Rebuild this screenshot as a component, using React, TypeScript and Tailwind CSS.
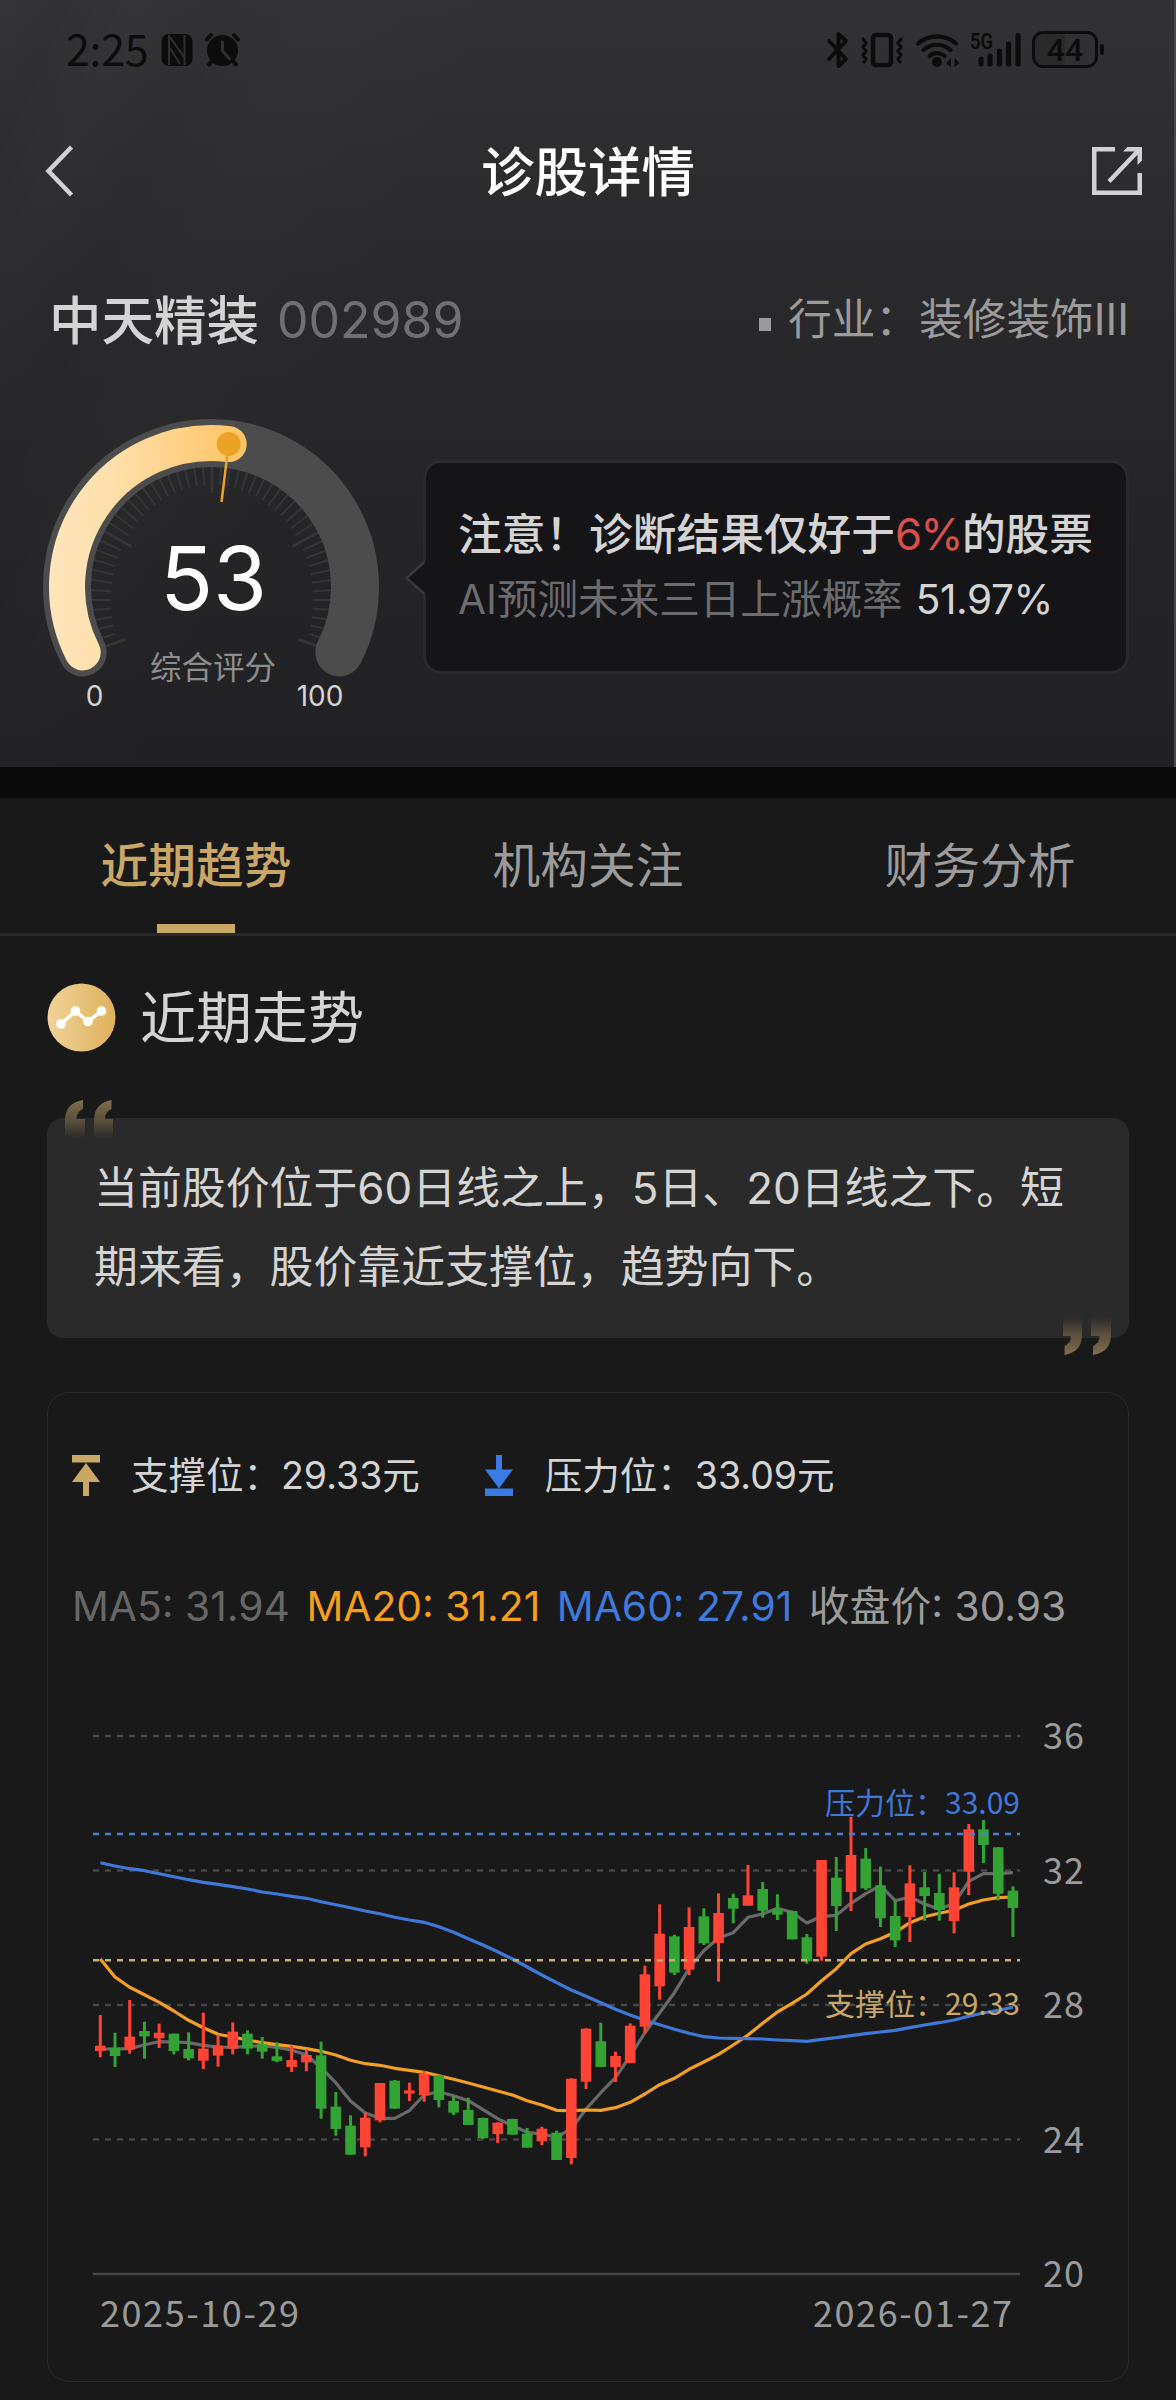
import { clsx } from "clsx"

type Candle = [up: 0 | 1, high: number, top: number, bottom: number, low: number]

// Vertical values are thirds of a pixel below the top of the chart.
const CANDLES: Candle[] = [
  [1, 945, 1037, 1053, 1072],
  [0, 998, 1043, 1068, 1101],
  [1, 900, 1010, 1049, 1061],
  [0, 965, 993, 1009, 1076],
  [1, 971, 998, 1015, 1044],
  [0, 1001, 1001, 1053, 1063],
  [0, 997, 1047, 1075, 1081],
  [1, 938, 1046, 1082, 1107],
  [1, 1004, 1037, 1067, 1100],
  [1, 967, 995, 1046, 1063],
  [0, 991, 1001, 1046, 1063],
  [0, 1011, 1033, 1055, 1076],
  [0, 1027, 1069, 1083, 1087],
  [1, 1037, 1080, 1101, 1116],
  [1, 1048, 1065, 1087, 1114],
  [0, 1025, 1066, 1226, 1256],
  [0, 1176, 1220, 1287, 1307],
  [0, 1246, 1277, 1364, 1364],
  [1, 1238, 1253, 1342, 1369],
  [1, 1149, 1149, 1261, 1267],
  [0, 1140, 1142, 1226, 1226],
  [1, 1148, 1171, 1181, 1203],
  [1, 1113, 1122, 1186, 1205],
  [0, 1126, 1126, 1200, 1222],
  [0, 1189, 1203, 1238, 1245],
  [0, 1193, 1230, 1275, 1275],
  [0, 1253, 1254, 1314, 1317],
  [1, 1267, 1268, 1302, 1329],
  [0, 1256, 1257, 1304, 1304],
  [0, 1284, 1301, 1343, 1343],
  [1, 1280, 1286, 1324, 1335],
  [0, 1292, 1298, 1380, 1380],
  [1, 1135, 1136, 1374, 1393],
  [1, 985, 986, 1145, 1167],
  [0, 968, 1024, 1101, 1101],
  [1, 1055, 1068, 1101, 1146],
  [1, 970, 977, 1089, 1089],
  [1, 797, 823, 980, 1000],
  [1, 613, 701, 859, 899],
  [0, 704, 709, 818, 825],
  [1, 622, 681, 809, 825],
  [0, 625, 649, 730, 735],
  [1, 580, 639, 729, 845],
  [0, 581, 594, 626, 670],
  [1, 495, 586, 617, 617],
  [0, 546, 567, 632, 653],
  [0, 583, 628, 644, 660],
  [0, 632, 633, 718, 718],
  [0, 702, 712, 783, 791],
  [1, 480, 480, 770, 782],
  [0, 471, 533, 618, 693],
  [1, 350, 465, 576, 633],
  [0, 444, 476, 565, 570],
  [0, 500, 556, 655, 681],
  [0, 602, 648, 721, 741],
  [1, 496, 550, 651, 726],
  [0, 516, 562, 588, 662],
  [0, 522, 579, 630, 662],
  [1, 517, 562, 663, 700],
  [1, 372, 388, 515, 585],
  [0, 360, 388, 435, 489],
  [0, 441, 442, 581, 601],
  [0, 559, 572, 624, 711],
]

const MA5 = [
  1047, 1047, 1046, 1034, 1025, 1026, 1028, 1036, 1041, 1042, 1039, 1037, 1042,
  1051, 1064, 1103, 1148, 1203, 1239, 1255, 1255, 1232, 1185, 1175, 1187, 1202,
  1229, 1256, 1277, 1297, 1302, 1312, 1286, 1227, 1178, 1133, 1068, 998, 938,
  878, 805, 752, 714, 698, 652, 642, 625, 637, 669, 649, 646, 610, 581, 557,
  602, 591, 612, 628, 610, 544, 521, 521, 518,
]

const MA20 = [
  777, 831, 862, 884, 907, 933, 961, 983, 1003, 1011, 1020, 1028, 1034, 1039,
  1046, 1054, 1065, 1081, 1091, 1096, 1105, 1111, 1117, 1127, 1138, 1149, 1161,
  1173, 1185, 1202, 1215, 1231, 1232, 1230, 1231, 1223, 1207, 1182, 1154, 1135,
  1108, 1086, 1063, 1035, 1005, 970, 936, 910, 882, 842, 806, 761, 732, 716,
  697, 668, 650, 640, 631, 612, 600, 593, 591,
]

const MA60 = [
  488, 498, 506, 512, 521, 530, 539, 547, 553, 560, 567, 576, 582, 589, 595,
  605, 614, 623, 633, 641, 652, 660, 667, 680, 697, 716, 735, 755, 777, 801,
  825, 848, 870, 889, 908, 928, 945, 961, 974, 988, 1000, 1010, 1014, 1015,
  1016, 1017, 1020, 1022, 1024, 1018, 1013, 1007, 1001, 996, 991, 983, 975,
  968, 960, 949, 939, 931, 922,
]

const TABS = ["近期趋势", "机构关注", "财务分析"]

const px = (i: number) => 52.3 + i * 14.72
const py = (v: number) => v / 3
const toPoints = (values: number[]) =>
  values.map((v, i) => `${px(i).toFixed(1)},${py(v).toFixed(1)}`).join(" ")

function StatusBar() {
  return (
    <div className="flex h-[99px] items-center pr-[70px] pl-[66px] text-[#0c0c0c]">
      <span className="-mt-[4px] w-[83px] font-['Noto_Sans_CJK_SC',sans-serif] text-[43px] leading-none tracking-[-0.3px]">
        2:25
      </span>
      <svg className="ml-[12px] h-[34px] w-[32px]" viewBox="0 0 32 34">
        <rect x="0.5" y="1" width="31" height="32" rx="7" fill="currentColor" />
        <path
          d="M8 2v30M23.500 32V2M9 4l14 20M9 15l10 16"
          fill="none"
          stroke="#2f2f31"
          strokeWidth="2"
        />
      </svg>
      <svg className="ml-[11px] h-[35px] w-[37px]" viewBox="0 0 37 35">
        <g fill="none" stroke="currentColor" strokeLinecap="round" strokeWidth="4">
          <path d="M3 7.5 7 3M34 7.5 30 3M7.5 29.5 5 32.5M29.5 29.5 32 32.5" />
        </g>
        <circle cx="18.5" cy="18.5" r="15.5" fill="currentColor" />
        <path
          d="M18.500 10v9l7 8"
          fill="none"
          stroke="#2f2f31"
          strokeLinecap="round"
          strokeWidth="3"
        />
      </svg>
      <svg className="ml-auto h-[38px] w-[24px]" viewBox="0 0 24 38">
        <path
          d="M3 10 20 28l-7.500 7V3L20 10 3 28"
          fill="none"
          stroke="currentColor"
          strokeLinecap="round"
          strokeLinejoin="round"
          strokeWidth="4"
        />
      </svg>
      <svg className="ml-[10px] h-[36px] w-[44px]" viewBox="0 0 44 36">
        <g
          fill="none"
          stroke="currentColor"
          strokeLinecap="round"
          strokeLinejoin="round"
        >
          <rect x="13" y="3" width="18" height="30" rx="3" strokeWidth="4.500" />
          <path
            d="M3 7l3 4-3 4 3 4-3 4 3 4-2 3M41 7l-3 4 3 4-3 4 3 4-3 4 2 3"
            strokeWidth="3.200"
          />
        </g>
      </svg>
      <svg className="ml-[11px] h-[36px] w-[46px]" viewBox="0 0 46 36">
        <g fill="none" stroke="currentColor" strokeLinecap="round" strokeWidth="4.200">
          <path d="M3 11.500a29 29 0 0 1 38 0M8.500 18a20 20 0 0 1 27 0M14.500 24a11 11 0 0 1 15 0" />
        </g>
        <circle cx="22" cy="30" r="5" fill="currentColor" />
        <path d="m36 26v9l-5-3.500ZM39.500 35v-9l5 5Z" fill="currentColor" />
      </svg>
      <svg className="ml-[5px] h-[54px] w-[56px]" viewBox="-4 -8 56 54">
        <text
          x="0"
          y="18"
          fill="currentColor"
          fontFamily="Roboto, sans-serif"
          fontSize="22"
          fontWeight="600"
          textLength="23"
          lengthAdjust="spacingAndGlyphs"
        >
          5G
        </text>
        <g stroke="currentColor" strokeLinecap="round" strokeWidth="5.200">
          <path d="M11 28v5M20 25v8M29.500 20v13M38.500 13v20M48 4.500V33" />
        </g>
      </svg>
      <div className="ml-[10px] flex h-[37px] w-[66px] items-center justify-center rounded-[11px] border-[3px] border-[#0c0c0c] bg-linear-to-r from-[#2a2a2b] from-50% to-transparent to-50% font-[Roboto,sans-serif] text-[32px] leading-none font-medium">
        44
      </div>
      <div className="ml-[2px] h-[11px] w-[4px] rounded-full bg-[#0c0c0c]" />
    </div>
  )
}

function NavBar() {
  return (
    <div className="flex h-[144px] items-center justify-between pr-[32px] pl-[45px]">
      <svg className="h-[52px] w-[30px]" viewBox="0 0 30 52">
        <path d="M26.500 2 3.500 26l23 24" fill="none" stroke="#d2d2d2" strokeWidth="4.500" />
      </svg>
      <h1 className="mt-[4px] ml-[9px] text-[53.500px] leading-none font-medium text-white">
        诊股详情
      </h1>
      <svg className="h-[50px] w-[50px]" viewBox="0 0 50 50">
        <g fill="none" stroke="#d2d2d2" strokeWidth="4.500">
          <path d="M23 3.250H2.250v43.500h45.500V27" />
          <path d="M17 35.500 46 5" />
        </g>
        <path d="M31 5.500 35.500 1H50v13.500L45.500 19V5.500Z" fill="#d2d2d2" />
      </svg>
    </div>
  )
}

function Gauge() {
  const ticks = Array.from({ length: 53 }, (_, i) => {
    const n = i - 26
    const major = n % 14 === 0 || Math.abs(n) === 26
    const angle = ((90 - n * (60 / 14)) * Math.PI) / 180
    const rx = major ? 93 : 101
    const ry = major ? 107 : 115
    return {
      major,
      x1: 212 + rx * Math.cos(angle),
      y1: 201 - ry * Math.sin(angle),
      x2: 212 + 125 * Math.cos(angle),
      y2: 201 - 138 * Math.sin(angle),
    }
  })

  return (
    <svg className="h-[368px] w-[424px] shrink-0" viewBox="0 0 424 368">
      <defs>
        <linearGradient
          id="score"
          gradientUnits="userSpaceOnUse"
          x1="49"
          x2="246"
          y1="0"
          y2="0"
        >
          <stop offset="0" stopColor="#ffe5bc" />
          <stop offset="0.3" stopColor="#ffe0ad" />
          <stop offset="1" stopColor="#ffc363" />
        </linearGradient>
        <clipPath id="dial">
          <circle cx="211" cy="188" r="122" />
        </clipPath>
      </defs>
      <g clipPath="url(#dial)" stroke="#353537">
        {ticks.map(({ major, ...line }, i) => (
          <line key={i} {...line} strokeWidth={major ? 3 : 2} />
        ))}
      </g>
      <path
        d="M82.700 253.400A144 144 0 1 1 339.300 253.400"
        fill="none"
        stroke="#4c4c4c"
        strokeLinecap="round"
        strokeWidth="48"
      />
      <path
        d="M82.700 253.400A144 144 0 0 1 228.700 45.100"
        fill="none"
        stroke="url(#score)"
        strokeLinecap="round"
        strokeWidth="36"
      />
      <path d="M228.700 45 221.500 103" stroke="#eba327" strokeWidth="2.500" />
      <circle cx="228.700" cy="45.100" r="12" fill="#eba327" />
      <text x="213.500" y="210.500" fill="#fff" fontSize="87.500" textAnchor="middle">
        53
      </text>
      <text x="213" y="279.500" fill="#8d8d8e" fontSize="31.500" textAnchor="middle">
        综合评分
      </text>
      <g fill="#d4d4d4" fontSize="28" textAnchor="middle">
        <text x="94.500" y="307">
          0
        </text>
        <text x="320" y="307">
          100
        </text>
      </g>
    </svg>
  )
}

function DiagnosisBubble() {
  return (
    <div className="relative mt-[61px] -ml-px flex h-[214px] w-[706px] flex-col rounded-[18px] border-[3px] border-[#2b2b2d] bg-[#151517] pt-[45px] pl-[32px] whitespace-nowrap">
      <svg
        className="absolute top-[97px] -left-[22px] h-[36px] w-[23px]"
        viewBox="0 0 23 36"
      >
        <path d="M23 0 2.500 18 23 36Z" fill="#151517" />
        <path d="M20.500 2 2.500 18l18 16" fill="none" stroke="#38383a" strokeWidth="2.500" />
      </svg>
      <p className="text-[43.700px] leading-[54px] font-medium text-[#d4d4d4]">
        注意！诊断结果仅好于
        <span className="font-normal tracking-[-1.500px] text-[#d94f4b]">6%</span>的股票
      </p>
      <p className="mt-[11px] text-[40.600px] leading-[54px] text-[#6c6c6f]">
        AI预测未来三日上涨概率
        <span className="ml-[13px] tracking-[-0.4px] text-[#d4d4d4]">51.97%</span>
      </p>
    </div>
  )
}

function Header() {
  return (
    <header className="h-[767px] border-r-2 border-[#48484a] bg-[linear-gradient(115deg,rgba(255,255,255,0.02)_0%,transparent_4%,rgba(255,255,255,0.015)_9%,transparent_14%,rgba(255,255,255,0.012)_22%,transparent_34%),linear-gradient(to_bottom,#323234,#29292b_38%,#212123)]">
      <StatusBar />
      <NavBar />
      <div className="flex h-[156px] items-center pr-[45px] pl-[49px] leading-none">
        <span className="text-[52.500px] font-medium text-[#d4d4d4]">中天精装</span>
        <span className="-mt-[3px] ml-[18px] text-[50px] font-normal text-[#707072]">
          002989
        </span>
        <div className="ml-auto h-[13px] w-[12px] translate-y-[3px] bg-[#9b9b9b]" />
        <span className="-mt-[3px] ml-[17px] text-[43.700px] text-[#9b9b9b]">
          行业：装修装饰III
        </span>
      </div>
      <div className="flex items-start">
        <Gauge />
        <DiagnosisBubble />
      </div>
    </header>
  )
}

function Tabs() {
  return (
    <nav className="grid h-[138px] grid-cols-3 border-b-[3px] border-[#2a2a2c]">
      {TABS.map((tab, i) => (
        <div
          key={tab}
          className={clsx(
            "flex flex-col items-center pt-[38px] text-[47.700px] leading-[60px]",
            i === 0 ? "font-medium text-[#c9a765]" : "text-[#9b9b9b]",
          )}
        >
          {tab}
          {i === 0 && <div className="mt-auto h-[9px] w-[78px] bg-[#c9a765]" />}
        </div>
      ))}
    </nav>
  )
}

function QuoteMark({ id, className }: { id: string; className: string }) {
  return (
    <svg className={clsx("absolute h-[38px] w-[49px]", className)} viewBox="0 0 49 38">
      <defs>
        <linearGradient id={id} x1="0" x2="0" y1="0" y2="1">
          <stop offset="0" stopColor="#82714f" />
          <stop offset="0.500" stopColor="#6b5d43" stopOpacity="0.800" />
          <stop offset="1" stopColor="#6b5d43" stopOpacity="0" />
        </linearGradient>
      </defs>
      <path
        d="M18 0v9c-4 2-6.500 5-6.500 10H20v19H0V20C0 9 6 2 18 0ZM46.500 0v9c-4 2-6.500 5-6.500 10H48v19H29V20C29 9 35 2 46.500 0Z"
        fill={`url(#${id})`}
      />
    </svg>
  )
}

function TrendSummary() {
  return (
    <div className="relative mt-[65px] h-[220px] rounded-[16px] bg-[#2a2a2a] pt-[31px] pl-[47px] text-[43.900px] leading-[79px] text-[#d4d4d4]">
      <QuoteMark id="quote-open" className="top-[-18px] left-[18px]" />
      <p className="whitespace-nowrap">
        当前股价位于60日线之上，5日、20日线之下。短
        <br />
        期来看，股价靠近支撑位，趋势向下。
      </p>
      <QuoteMark id="quote-close" className="right-[18px] bottom-[-17px] rotate-180" />
    </div>
  )
}

function CandleChart() {
  return (
    <svg
      className="mt-[45px] h-[680px] w-[1080px] font-['Noto_Sans_CJK_SC',sans-serif]"
      viewBox="0 0 1080 680"
    >
      {[36, 32, 28, 24, 20].map((price, i) => {
        const y = 36 + i * 134.5
        return (
          <g key={price}>
            <line
              x1="45"
              x2="972"
              y1={y}
              y2={y}
              stroke="#464648"
              strokeDasharray={price === 20 ? undefined : "6 6"}
              strokeWidth="2.400"
            />
            <text
              x="995"
              y={y + 13}
              fill="#9b9b9b"
              fontSize="36"
              textLength="41"
            >
              {price}
            </text>
          </g>
        )
      })}

      <g fill="none" strokeLinejoin="round" strokeWidth="3.200">
        <polyline points={toPoints(MA5)} stroke="#696969" />
        <polyline points={toPoints(MA20)} stroke="#f2a023" />
        <polyline points={toPoints(MA60)} stroke="#3f78d8" />
      </g>

      {CANDLES.map(([up, high, top, bottom, low], i) => (
        <g key={i} fill={up ? "#ff4433" : "#33a433"}>
          <rect x={px(i) - 1.5} y={py(high)} width="3" height={py(low - high)} />
          <rect x={px(i) - 5.3} y={py(top)} width="10.600" height={py(bottom - top)} />
        </g>
      ))}

      <g strokeDasharray="6 6" strokeWidth="2.400">
        <line x1="45" x2="972" y1="134" y2="134" stroke="#4a7fd6" />
        <line x1="45" x2="972" y1="260.300" y2="260.300" stroke="#cdac72" />
      </g>
      <g fontSize="30">
        <text x="777" y="114" fill="#3f78d8" textLength="195">
          压力位：33.09
        </text>
        <text x="777" y="315" fill="#c9a765" textLength="195">
          支撑位：29.33
        </text>
      </g>

      <g fill="#9b9b9b" fontSize="36">
        <text x="52" y="627" textLength="199">
          2025-10-29
        </text>
        <text x="765" y="627" textLength="199">
          2026-01-27
        </text>
      </g>
    </svg>
  )
}

function TrendCard() {
  return (
    <div className="mt-[54px] h-[990px] rounded-[22px] border border-[#29292b]">
      <div className="flex h-[162px] items-center pt-[3px] pl-[24px] text-[37.500px] leading-none text-[#d4d4d4]">
        <svg className="h-[41px] w-[28px]" viewBox="0 0 28 41">
          <path d="M0 0h28v7.500H0ZM14 8l14 19H17v14h-6V27H0Z" fill="#c9a765" />
        </svg>
        <span className="ml-[31px]">支撑位：29.33元</span>
        <svg className="ml-[65px] h-[41px] w-[28px]" viewBox="0 0 28 41">
          <path d="M0 41h28v-7.500H0ZM14 33.500l14-19H17V0h-6v14.500H0Z" fill="#3a7ce6" />
        </svg>
        <span className="ml-[32px]">压力位：33.09元</span>
      </div>
      <div className="flex h-[100px] items-center gap-[16.500px] pt-[3px] pl-[24px] text-[40.800px] leading-none whitespace-nowrap">
        <span className="text-[#676767]">MA5: 31.94</span>
        <span className="text-[#f59f1a]">MA20: 31.21</span>
        <span className="text-[#3e7bdc]">MA60: 27.91</span>
        <span className="text-[#9b9b9b]">收盘价: 30.93</span>
      </div>
      <CandleChart />
    </div>
  )
}

export default function App() {
  return (
    <div className="h-[2400px] w-[1176px] overflow-hidden bg-[#19191a] font-[Inter,'Noto_Sans_CJK_SC',sans-serif]">
      <Header />
      <div className="h-[31px] bg-[#0a0a0a]" />
      <Tabs />
      <main className="px-[47px] pt-[45px]">
        <div className="flex h-[72px] items-center gap-[24px]">
          <svg className="h-[69px] w-[69px]" viewBox="0 0 69 69">
            <defs>
              <linearGradient id="badge">
                <stop offset="0" stopColor="#efd299" />
                <stop offset="1" stopColor="#dfb15c" />
              </linearGradient>
            </defs>
            <circle cx="34.500" cy="34.500" r="34" fill="url(#badge)" />
            <g fill="#fff">
              <path
                d="M14 41 28.500 28 41 38.500 54.500 28"
                fill="none"
                stroke="#fff"
                strokeWidth="3.500"
              />
              <circle cx="14" cy="41" r="4.800" />
              <circle cx="28.500" cy="28" r="4.800" />
              <circle cx="41" cy="38.500" r="4.800" />
              <circle cx="54.500" cy="28" r="4.800" />
            </g>
          </svg>
          <h2 className="mt-[2px] text-[56px] leading-none text-[#d4d4d4]">近期走势</h2>
        </div>
        <TrendSummary />
        <TrendCard />
      </main>
    </div>
  )
}
